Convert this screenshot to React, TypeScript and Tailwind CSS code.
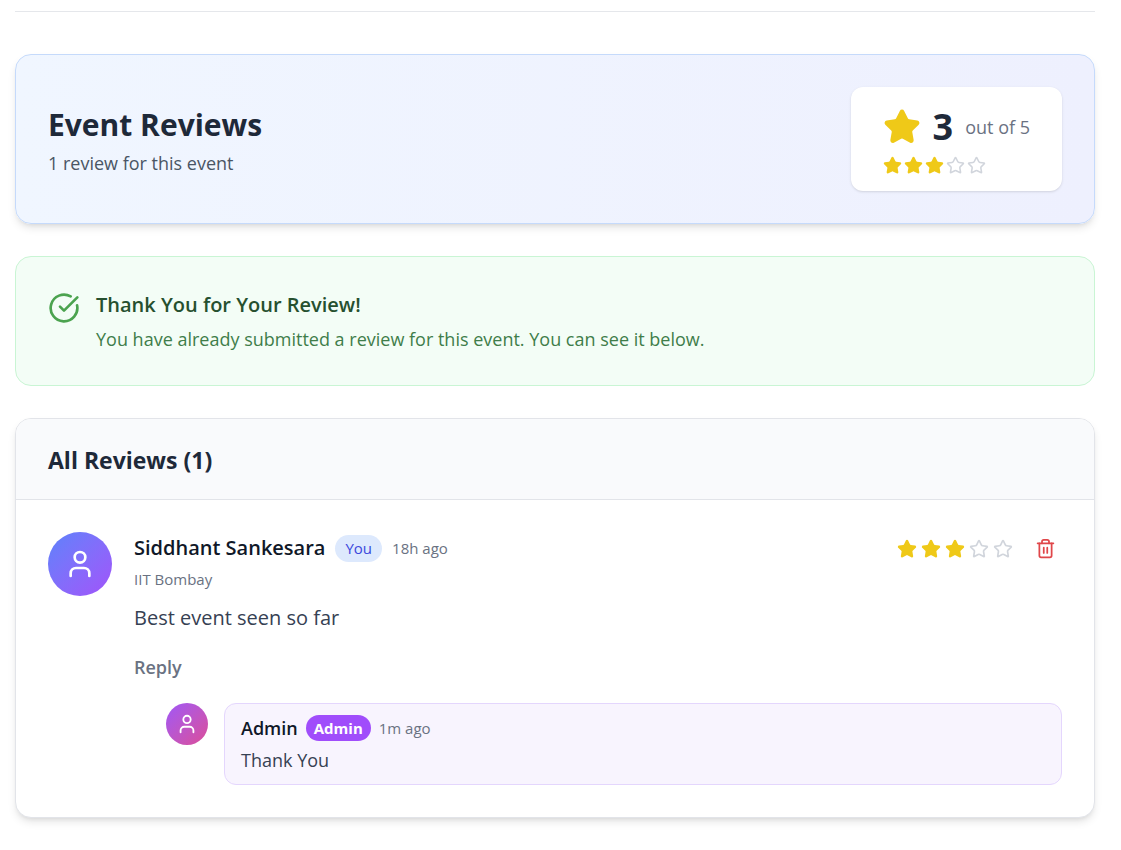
import { CircleCheckBig, Star, Trash2, User } from "lucide-react";

type StarRowProps = { rating: number; size: string; gap: string };

function StarRow({ rating, size, gap }: StarRowProps) {
  return (
    <div className={`flex items-center ${gap}`} role="img" aria-label={`${rating} out of 5 stars`}>
      {[1, 2, 3, 4, 5].map((n) => (
        <Star
          key={n}
          className={`${size} ${n <= rating ? "fill-[#efc918] text-[#efc918]" : "text-[#d1d5dc]"}`}
        />
      ))}
    </div>
  );
}

function Summary() {
  return (
    <section className="mt-[42px] flex items-center justify-between rounded-2xl border border-[#c5dafb] bg-linear-to-r from-[#f0f6ff] to-[#eef0fe] p-8 shadow-[0_5px_8px_-1px_rgb(0_0_0/0.1),0_3px_5px_-3px_rgb(0_0_0/0.1)]">
      <div className="pt-1">
        <h2 className="text-[30px] leading-10 font-bold text-[#1e2939]">Event Reviews</h2>
        <p className="mt-1 text-lg leading-7 text-[#4a5565]">1 review for this event</p>
      </div>
      <div className="rounded-xl bg-white px-8 py-4 shadow-sm">
        <div className="flex items-center gap-3">
          <Star className="size-[38px] fill-[#efc918] text-[#efc918]" />
          <span className="text-4xl leading-12 font-bold text-[#1e2939]">3</span>
          <span className="text-lg leading-7 text-[#6a7282]">out of 5</span>
        </div>
        <div className="mt-[5px]">
          <StarRow rating={3} size="size-[19px]" gap="gap-[2px]" />
        </div>
      </div>
    </section>
  );
}

function ThankYou() {
  return (
    <section className="mt-8 flex items-start gap-4 rounded-2xl border border-[#c9f5d4] bg-[#f3fdf6] p-8">
      <CircleCheckBig className="mt-[3px] size-8 shrink-0 text-[#4ba34f]" />
      <div>
        <h3 className="text-xl leading-8 font-semibold text-[#26502f]">Thank You for Your Review!</h3>
        <p className="mt-1 text-lg leading-7 text-[#3f7d4a]">
          You have already submitted a review for this event. You can see it below.
        </p>
      </div>
    </section>
  );
}

function Reply() {
  return (
    <div className="mt-[22px] ml-8 flex items-start gap-4">
      <div className="flex size-[42px] shrink-0 items-center justify-center rounded-full bg-linear-to-br from-[#a055f7] to-[#dc4a98]">
        <User className="size-[22px] text-white" />
      </div>
      <div className="flex-1 rounded-xl border border-[#e4d6fd] bg-[#f8f4fe] px-4 py-[10px]">
        <div className="flex items-center gap-2">
          <span className="text-lg leading-7 font-semibold text-[#101828]">Admin</span>
          <span className="rounded-full bg-[#a04dfb] px-2 text-[15px] leading-[26px] font-bold text-white">Admin</span>
          <span className="text-[15px] leading-6 text-[#6a7282]">1m ago</span>
        </div>
        <p className="mt-1 text-lg leading-7 text-[#364153]">Thank You</p>
      </div>
    </div>
  );
}

function Review() {
  return (
    <article className="flex items-start gap-[22px] p-8">
      <div className="flex size-16 shrink-0 items-center justify-center rounded-full bg-linear-to-br from-[#5a82fb] to-[#a052fa]">
        <User className="size-8 text-white" />
      </div>
      <div className="min-w-0 flex-1">
        <div className="flex items-start justify-between">
          <div>
            <div className="flex items-center gap-[10px]">
              <h4 className="text-xl leading-8 font-semibold text-[#101828]">Siddhant Sankesara</h4>
              <span className="rounded-full bg-[#dde9fd] px-[10px] text-[15px] leading-[27px] text-[#3c48dc]">You</span>
              <span className="text-[15px] leading-6 text-[#6a7282]">18h ago</span>
            </div>
            <p className="mt-[3px] text-[15px] leading-6 text-[#6a7282]">IIT Bombay</p>
          </div>
          <div className="flex items-center gap-4">
            <StarRow rating={3} size="size-5" gap="gap-1" />
            <button type="button" aria-label="Delete review" className="p-[6px] text-[#e0474a]">
              <Trash2 className="size-[21px]" />
            </button>
          </div>
        </div>
        <p className="mt-[11px] text-xl leading-8 text-[#364153]">Best event seen so far</p>
        <button type="button" className="mt-[19px] block text-lg leading-7 font-semibold text-[#6a7282]">
          Reply
        </button>
        <Reply />
      </div>
    </article>
  );
}

export default function App() {
  return (
    <main className="pt-[11px] pr-[26px] pb-8 pl-[15px] font-['Open_Sans','Noto_Sans',sans-serif]">
      <hr className="border-t border-[#e5e7eb]" />
      <Summary />
      <ThankYou />
      <section className="mt-8 overflow-hidden rounded-2xl border border-[#e2e4e9] bg-white shadow-[0_5px_8px_-1px_rgb(0_0_0/0.1),0_3px_5px_-3px_rgb(0_0_0/0.1)]">
        <header className="border-b border-[#e2e4e9] bg-[#f9fafc] px-8 pt-[25px] pb-[23px]">
          <h3 className="text-[23px] leading-8 font-bold text-[#1e2939]">All Reviews (1)</h3>
        </header>
        <Review />
      </section>
    </main>
  );
}
